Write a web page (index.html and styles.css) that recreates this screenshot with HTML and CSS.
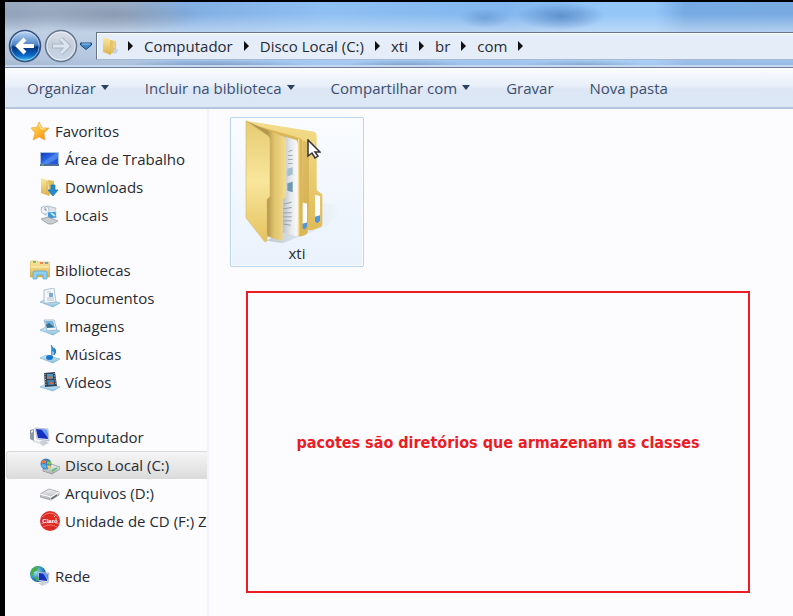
FILE: index.html
```html
<!DOCTYPE html>
<html lang="pt-BR">
<head>
<meta charset="utf-8">
<meta name="viewport" content="width=device-width, initial-scale=1">
<title>com</title>
<link rel="stylesheet" href="styles.css">
</head>
<body>
<svg class="defs" width="0" height="0" aria-hidden="true">
  <defs>
    <linearGradient id="gold" x1="0" y1="0" x2="0" y2="1"><stop offset="0" stop-color="#fbe9a2"/><stop offset="1" stop-color="#dcb04a"/></linearGradient>
    <linearGradient id="screen" x1="0" y1="0" x2="1" y2="1"><stop offset="0" stop-color="#1238b8"/><stop offset=".5" stop-color="#2f6be6"/><stop offset="1" stop-color="#1f4fcf"/></linearGradient>
    <linearGradient id="tray" x1="0" y1="0" x2="0" y2="1"><stop offset="0" stop-color="#d9f0fb"/><stop offset="1" stop-color="#86bfe0"/></linearGradient>
    <linearGradient id="metal" x1="0" y1="0" x2="0" y2="1"><stop offset="0" stop-color="#f3f3f3"/><stop offset="1" stop-color="#a8adb2"/></linearGradient>
    <linearGradient id="star" x1="0" y1="0" x2="1" y2="1"><stop offset="0" stop-color="#ffe27a"/><stop offset=".5" stop-color="#fdb52e"/><stop offset="1" stop-color="#f08a1c"/></linearGradient>
    <radialGradient id="globe" cx=".35" cy=".35" r=".7"><stop offset="0" stop-color="#a8e8f4"/><stop offset=".6" stop-color="#2f8fc8"/><stop offset="1" stop-color="#174f94"/></radialGradient>
    <linearGradient id="blueBall" x1="0" y1="0" x2="0" y2="1"><stop offset="0" stop-color="#c3dbf3"/><stop offset=".46" stop-color="#4f86c8"/><stop offset=".54" stop-color="#06357f"/><stop offset=".8" stop-color="#0d68c8"/><stop offset="1" stop-color="#39c8f5"/></linearGradient>
    <linearGradient id="greyBall" x1="0" y1="0" x2="0" y2="1"><stop offset="0" stop-color="#dbe1e9"/><stop offset=".5" stop-color="#c3ccd9"/><stop offset="1" stop-color="#c9d8ea"/></linearGradient>
  </defs>
</svg>
<div class="window">
  <header class="titlebar">
    <div class="nav">
      <button class="round" aria-label="Voltar"><svg viewBox="0 0 34 34"><circle cx="17" cy="17" r="15.5" fill="url(#blueBall)" stroke="#35507c" stroke-width="1.5"/><circle cx="17" cy="17" r="14.2" fill="none" stroke="#d4e6f8" stroke-opacity=".6"/><path d="M26 17H10M17 10l-7 7 7 7" fill="none" stroke="#fff" stroke-width="4"/></svg></button>
      <button class="round" aria-label="Avançar"><svg viewBox="0 0 34 34"><circle cx="17" cy="17" r="15.5" fill="url(#greyBall)" stroke="#67758b" stroke-width="1.5"/><circle cx="17" cy="17" r="14" fill="none" stroke="#eef3fa" stroke-opacity=".8"/><path d="M8 17h16M17 10l7 7-7 7" fill="none" stroke="#a9b5c6" stroke-width="5"/><path d="M9 17h15M17 10l7 7-7 7" fill="none" stroke="#dce4ee" stroke-width="3"/></svg></button>
      <button class="recent" aria-label="Páginas recentes"><svg viewBox="0 0 12 8"><path d="M.5 1h11v2L6 7.5.5 3z" fill="#3f86c4" stroke="#174879"/><path d="M2 2h8" stroke="#9cc8ea"/></svg></button>
    </div>
    <nav class="address" aria-label="Caminho">
      <svg class="addr-icon" viewBox="0 0 20 20"><path d="M9 4l6 1v11l-6 2z" fill="#e6c368"/><path d="M13 13h4l-1 4-3 1z" fill="#c5d3e2"/><path d="M2 1l6 2q1 0 1 1v8l1 1v6L2 16z" fill="url(#gold)"/><path d="M13 4v8" stroke="#f8e7ab"/></svg>
      <i class="sep"></i><a href="#">Computador</a>
      <i class="sep"></i><a href="#">Disco Local (C:)</a>
      <i class="sep"></i><a href="#">xti</a>
      <i class="sep"></i><a href="#">br</a>
      <i class="sep"></i><a href="#">com</a>
      <i class="sep"></i>
    </nav>
  </header>
  <div class="toolbar">
    <button>Organizar<i class="caret"></i></button>
    <button>Incluir na biblioteca<i class="caret"></i></button>
    <button>Compartilhar com<i class="caret"></i></button>
    <button>Gravar</button>
    <button>Nova pasta</button>
  </div>
  <div class="body">
    <aside class="sidebar">
      <ul>
        <li><a class="root" href="#"><svg viewBox="0 0 20 20"><path d="M9 1l3 6 7 0-5 5 1 7-6-3-6 3 2-7-4-5 6-1z" fill="url(#star)" stroke="#e9a03a" stroke-width=".6"/><path d="M9 3l2 5 5 0" fill="none" stroke="#fff0a8"/></svg>Favoritos</a></li>
        <li><a href="#"><svg viewBox="0 0 20 20"><path d="M0 3h19v14H0z" fill="#a9c2df"/><path d="M1 4h17v11H1z" fill="url(#screen)"/><path d="M1 15L16 4h2v5L8 15z" fill="#6aa0f6" opacity=".5"/><path d="M0 16h19" stroke="#4d6f9c" stroke-width="2"/><path d="M1 16h3" stroke="#5fc85a"/></svg>Área de Trabalho</a></li>
        <li><a href="#"><svg viewBox="0 0 20 20"><path d="M8 3l6 1v12l-5 2z" fill="#e2bd5c"/><path d="M1 1l6 2 1 1v8l1 1v6l-8-3z" fill="url(#gold)"/><path d="M7 4v9" stroke="#d3a94e" stroke-width=".7"/><path d="M11 8h4v5h3l-5 6-5-6h3z" fill="#238bd2" stroke="#176dad" stroke-width=".7"/></svg>Downloads</a></li>
        <li><a href="#"><svg viewBox="0 0 20 20"><path d="M1 3l7-2 8 2-2 7H5z" fill="#dce2e7" stroke="#a3acb5" stroke-width=".7"/><circle cx="5" cy="5" r="4" fill="#eef5fa" stroke="#a3b1bd" stroke-width=".7"/><path d="M5 2v3h2" fill="none" stroke="#6e7f8f" stroke-width=".8"/><path d="M7 7l9-1 1 7-9 1z" fill="#3d9ad8" stroke="#eef3f7"/><path d="M1 14l7-2 10 4-6 3H8z" fill="#c9cdd1" stroke="#8b9299" stroke-width=".7"/><path d="M11 8l4 3" stroke="#bce6ff" stroke-width="2"/></svg>Locais</a></li>
      </ul>
      <ul>
        <li><a class="root" href="#"><svg viewBox="0 0 20 20"><path d="M0 3l1-2h6l1 1h11l1 2v13H0z" fill="url(#gold)" stroke="#d8ae55" stroke-width=".6"/><path d="M3 2h3" stroke="#55b25d" stroke-width="1.5"/><path d="M10 3h3" stroke="#e46c4b" stroke-width="1.5"/><path d="M15 3h3" stroke="#4b95d5" stroke-width="1.5"/><path d="M1 7h18" stroke="#fff4c4"/><path d="M3 19v-6q0-2 2-2h10q2 0 2 2v6h-4v-4H7v4z" fill="#8ed0ee" stroke="#58a3cb" stroke-width=".7"/></svg>Bibliotecas</a></li>
        <li><a href="#"><svg viewBox="0 0 20 20"><path d="M0 14l6-3 14 4-7 4z" fill="url(#tray)" stroke="#76aac8" stroke-width=".6"/><path d="M4 2l10-2 2 14-9 1H4z" fill="#f2f7fb" stroke="#a2b2c0" stroke-width=".8"/><path d="M7 4h4M7 10h7M7 12h7" stroke="#b4c2d0"/><path d="M9 5h4v4H9z" fill="#7fa8ce"/></svg>Documentos</a></li>
        <li><a href="#"><svg viewBox="0 0 20 20"><path d="M0 14l6-3 14 4-7 4z" fill="url(#tray)" stroke="#76aac8" stroke-width=".6"/><path d="M4 4l10 0 3 10-10 1z" fill="#eef6fb" stroke="#93abc0" stroke-width=".8"/><path d="M5 5h8l2 7H7z" fill="#74b3df"/><path d="M6 9l3-2 5 4-7 1z" fill="#3d6c8c"/></svg>Imagens</a></li>
        <li><a href="#"><svg viewBox="0 0 20 20"><path d="M0 14l6-3 14 4-7 4z" fill="url(#tray)" stroke="#76aac8" stroke-width=".6"/><path d="M11 1q1 3 4 4 2 3-1 6 1-4-2-5v8" fill="#238bd6" stroke="#2478c2" stroke-width="1"/><ellipse cx="9.500" cy="13.500" rx="3.500" ry="2.500" fill="#1976cc"/></svg>Músicas</a></li>
        <li><a href="#"><svg viewBox="0 0 20 20"><path d="M0 15l6-3 14 3-7 4z" fill="url(#tray)" stroke="#76aac8" stroke-width=".6"/><path d="M4 1l11-1 2 14-12 1z" fill="#35414d"/><path d="M7 2h6v5H7z" fill="#4d97cb"/><path d="M7 8h7v5H8z" fill="#3a7fb8"/><path d="M7 6l3-2 3 3zM9 12l2-3 3 3z" fill="#cf6d3c"/><path d="M5 2l1 12M14 1l2 12" stroke="#b9c6d2" stroke-dasharray="1 1.500"/></svg>Vídeos</a></li>
      </ul>
      <ul>
        <li><a class="root" href="#"><svg viewBox="0 0 20 20"><path d="M0 3l4-1v12l-4-2z" fill="#8f98a7"/><path d="M1 4l2-1v2l-2 1z" fill="#e4e8ef"/><path d="M5 1l13 1 1 12-12-2z" fill="#dde3ec" stroke="#9aa5b5" stroke-width=".6"/><path d="M6 2l11 1 1 9-10-1z" fill="#1430c0"/><path d="M11 2l6 1 1 8z" fill="#6b9bf2"/><path d="M8 15l6-2 5 3-6 3z" fill="#c9d0d8"/><path d="M4 13l6 2-1 2-6-2z" fill="#dfe3e8"/></svg>Computador</a></li>
        <li><a class="selected" href="#"><svg viewBox="0 0 20 20"><path d="M3 14l8-5 9 3v2l-8 5-9-3z" fill="url(#metal)" stroke="#868c92" stroke-width=".7"/><path d="M12 16l5-3" stroke="#54c266" stroke-width="1.500"/><circle cx="6" cy="9" r="5.500" fill="#3c7cb8"/><path d="M2 6q3-2 4 0v3q-2-2-5 0z" fill="#ee7442"/><path d="M7 6q2 1 4 0v3q-2 1-4 0z" fill="#7dc552"/><path d="M1 10q3-2 5 0l1 4q-4-1-5-2z" fill="#57b3ec"/><path d="M7 10q2 1 4 0l-1 3-2 1z" fill="#f8cf45"/></svg>Disco Local (C:)</a></li>
        <li><a href="#"><svg viewBox="0 0 20 20"><path d="M0 11l9-5 10 3v3l-8 5L0 14z" fill="url(#metal)" stroke="#8f9499" stroke-width=".7"/><path d="M0 11l11 3 8-5M11 14v3" fill="none" stroke="#fff"/><path d="M11 16l6-4" stroke="#5f666d" stroke-width="1.500"/></svg>Arquivos (D:)</a></li>
        <li><a href="#"><svg viewBox="0 0 20 20"><circle cx="10" cy="10" r="10" fill="#df2a22"/><path d="M2 6q8-8 16 0M3 16q7-4 14 0M1 13q9-4 18 0" fill="none" stroke="#f58c80" stroke-width=".8"/><text x="10" y="12" class="logo">Claro</text><path d="M14 6l2-2M15 8h2" stroke="#fff" stroke-width=".8"/></svg>Unidade de CD (F:) Z</a></li>
      </ul>
      <ul>
        <li><a class="root" href="#"><svg viewBox="0 0 20 20"><circle cx="8" cy="8" r="8" fill="url(#globe)"/><path d="M2 3q4-4 7-2l-2 4-3 1-1 4-3-2z" fill="#49ad49"/><path d="M4 11l4 0 1 4-2 0z" fill="#49ad49"/><path d="M8 6l11 1-1 10-9-2z" fill="#dce4ee" stroke="#8d9aac" stroke-width=".6"/><path d="M9 7l9 1-1 7-8-1z" fill="#1331be"/><path d="M13 7l5 1-1 6z" fill="#6a9bf1"/><path d="M8 17l5-1 4 2-5 2z" fill="#cbd2da"/></svg>Rede</a></li>
      </ul>
    </aside>
    <main class="content">
      <a class="folder" href="#">
        <svg class="folder-art" viewBox="0 0 330 380">
          <defs>
            <linearGradient id="cover" x1="0" y1="0" x2="0" y2="1"><stop offset="0" stop-color="#e6cb72"/><stop offset=".5" stop-color="#f8e69c"/><stop offset="1" stop-color="#e6c260"/></linearGradient>
            <linearGradient id="back" x1="0" y1="0" x2="0" y2="1"><stop offset="0" stop-color="#f3dc8a"/><stop offset="1" stop-color="#e0bb58"/></linearGradient>
            <linearGradient id="inner" gradientUnits="userSpaceOnUse" x1="85" y1="0" x2="141" y2="0"><stop offset="0" stop-color="#b3954c"/><stop offset=".35" stop-color="#dfc26c"/><stop offset="1" stop-color="#f3dd8c"/></linearGradient>
            <linearGradient id="paper" gradientUnits="userSpaceOnUse" x1="130" y1="0" x2="176" y2="0"><stop offset="0" stop-color="#b9bec4"/><stop offset=".5" stop-color="#e3e6e9"/><stop offset="1" stop-color="#fbfbfc"/></linearGradient>
            <linearGradient id="shade" x1="0" y1="0" x2="1" y2="0"><stop offset="0" stop-color="#9aa5b1" stop-opacity=".55"/><stop offset="1" stop-color="#c8d0da" stop-opacity="0"/></linearGradient>
          </defs>
          <path d="M84 368L245 255q50 0 65 25l-50 45-130 50z" fill="url(#shade)"/>
          <path d="M21 8L222 40q11 2 11 14v162l17 12v90q0 6-6 9l-26 9-28-2V80z" fill="url(#back)"/>
          <path d="M192 66l18 8v180l-4 80-15-70z" fill="#c79f45" opacity=".45"/>
          <path d="M228 230l15 4v58l-15 6z" fill="#fff"/><path d="M228 296l15-5v15l-7 9-8-5z" fill="#4b97e2"/>
          <path d="M60 24L184 60q7 3 7 12v168l15 14v88q-4 11-26 13l-4-10V80z" fill="#dbb656"/>
          <path d="M179 62v290" stroke="#f4e09a" stroke-width="4"/>
          <path d="M191 253l13 4v56l-13 4z" fill="#fff"/><path d="M191 317l13-4v12l-6 9-7-4z" fill="#4b97e2"/>
          <path d="M100 45l70 20q6 2 6 10v276l-6 3-40-12V70z" fill="url(#paper)"/>
          <path d="M148 100l12-4M147 112h14M147 124h14M147 136h14" stroke="#a4abb2" stroke-width="3"/>
          <path d="M145 152l16-5v22l-16 6z" fill="#a3bfce"/><path d="M145 196l16-6v32l-16-4z" fill="#6f98b0"/>
          <path d="M135 258l23-6M133 272l25-4M133 284h25M133 296h25M133 308h25M133 318l22 3" stroke="#98a0a8" stroke-width="3"/>
          <path d="M21 8l112 48q8 4 8 14v166l-10 9v116q-2 9-9 6l-37-13z" fill="url(#inner)"/>
          <path d="M21 8l65 44q7 5 7 16v166l-9 10v122q-2 9-8 3l-55-70z" fill="url(#cover)" stroke="#dabd66" stroke-width="2"/>
        </svg>
        <span>xti</span>
        <svg class="cursor" viewBox="0 0 14 20"><path d="M1 1v16l4-3 3 5 3-2-3-4h5z" fill="#fff" stroke="#3a3238" stroke-width="1.500"/></svg>
      </a>
      <p class="note">pacotes são diretórios que armazenam as classes</p>
    </main>
  </div>
</div>
</body>
</html>
```
FILE: styles.css
```css
* { box-sizing: border-box; }
body {
  margin: 0;
  min-height: 100vh;
  padding: 2px 0 0 5px;
  display: flex;
  background: #000;
  color: #262b33;
  font: 15px/28px "Open Sans", "Noto Sans", sans-serif;
}
.defs { position: absolute; }
svg { display: block; flex: none; }
a { color: inherit; text-decoration: none; }
button { border: 0; padding: 0; background: none; color: inherit; font: inherit; }
.window { flex: 1; min-width: 0; display: flex; flex-direction: column; background: #fcfcff; }

.titlebar {
  display: flex;
  align-items: center;
  height: 66px;
  padding-top: 22px;
  border-bottom: 1px solid #71809a;
  box-shadow: inset 0 -2px #c5d8ef;
  background:
    radial-gradient(ellipse 90px 18px at 110px 13px, #75849b88, transparent),
    radial-gradient(ellipse 40px 16px at 10px 14px, #8693b366, transparent),
    radial-gradient(ellipse 26px 10px at 480px 16px, #5e91cb99, transparent),
    radial-gradient(ellipse 44px 14px at 556px 14px, #4679b8aa, transparent),
    radial-gradient(ellipse 90px 5px at 210px 63px, #718db099, transparent),
    radial-gradient(ellipse 60px 5px at 400px 63px, #718db099, transparent),
    radial-gradient(ellipse 60px 5px at 580px 63px, #718db088, transparent),
    linear-gradient(#d5e4f600 12px, #d5e4f6a0 30px, #c5d8f090 56px, #b5ccea60),
    linear-gradient(90deg, #9aaabf 0, #a3b6cf 120px, #82aee2 180px, #8fc0f3 320px, #82b6ee 500px, #94c6f8 600px, #94c6f8 650px, #77aae3 680px, #79aae2);
}
.nav { display: flex; align-items: center; gap: 2px; padding: 0 4px 0 3px; }
.round, .round svg { width: 34px; height: 34px; }
.recent svg { width: 12px; height: 8px; }
.address {
  flex: 1;
  display: flex;
  align-items: center;
  gap: 11px;
  height: 28px;
  padding-left: 4px;
  border: 1px solid #66758d;
  border-right: 0;
  border-bottom-color: #a9b9cf;
  box-shadow: inset 1px 1px #fff;
  background: #e5edf8;
  white-space: nowrap;
}
.addr-icon { width: 20px; height: 20px; margin-right: -4px; }
.sep { border: solid transparent; border-width: 5px 0 5px 5px; border-left-color: #111; }

.toolbar {
  display: flex;
  gap: 36px;
  height: 41px;
  padding: 0 22px;
  border-bottom: 2px solid #b5c5dd;
  background: linear-gradient(#fbfdff, #e8eff9 45%, #dce6f4 55%, #dde8f6);
  color: #3b4f70;
  white-space: nowrap;
}
.toolbar button { display: flex; align-items: center; gap: 5px; }
.caret { border: solid transparent; border-width: 5px 4px 0; border-top-color: #2b4160; }

.body { flex: 1; display: flex; }
.sidebar {
  width: 204px;
  padding-top: 8px;
  border-right: 2px solid #f1f3fc;
  overflow: hidden;
  white-space: nowrap;
}
.sidebar ul { margin: 0 0 27px; padding: 0; list-style: none; }
.sidebar ul:last-child { margin: 0; }
.sidebar a { display: flex; align-items: center; gap: 5px; height: 28px; margin-left: 1px; padding-left: 34px; }
.sidebar .root { padding-left: 24px; }
.sidebar a.selected {
  background: linear-gradient(#f5f5f6, #dcdcdd);
  border: 1px solid #dadadb;
  border-right: 0;
  border-radius: 3px 0 0 3px;
  padding-left: 33px;
}
.sidebar svg { width: 20px; height: 20px; }
.logo { font: bold 6px "Liberation Sans", sans-serif; fill: #fff; text-anchor: middle; }

.content { flex: 1; display: flex; flex-direction: column; align-items: flex-start; padding: 8px 43px 23px 21px; }
.folder {
  position: relative;
  width: 134px;
  height: 150px;
  border: 1px solid #b9d5f2;
  border-radius: 2px;
  box-shadow: inset 0 0 0 1px #fafcff;
  background: linear-gradient(#fafcff, #eaf2fc);
  text-align: center;
}
.folder-art { width: 110px; height: 127px; margin-left: 8px; }
.folder span { display: block; line-height: 16px; }
.cursor { position: absolute; left: 76px; top: 21px; width: 14px; height: 20px; }
.note {
  flex: 1;
  align-self: stretch;
  display: flex;
  align-items: center;
  justify-content: center;
  margin: 24px 0 0 16px;
  padding-top: 2px;
  border: 2px solid #ed1c24;
  color: #ed1c24;
  font: bold 16px/20px "DejaVu Sans Condensed", "DejaVu Sans", sans-serif;
}
```
